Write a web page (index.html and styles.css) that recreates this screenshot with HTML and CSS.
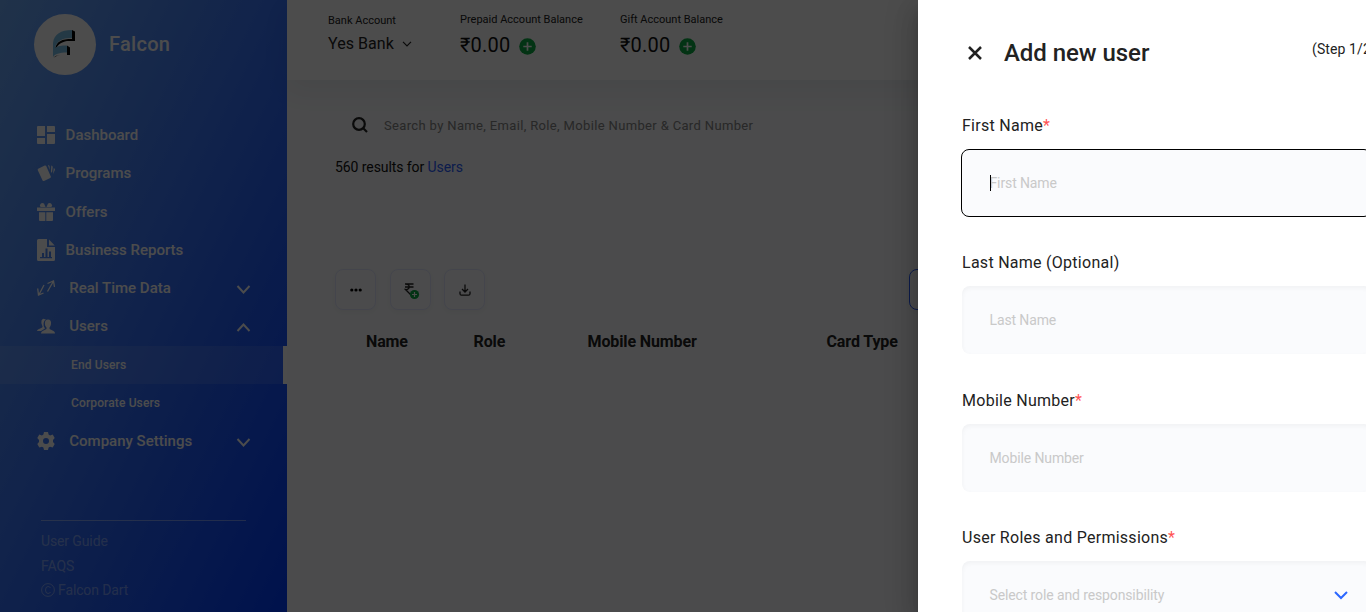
FILE: index.html
```html
<!DOCTYPE html>
<html lang="en">
<head>
<meta charset="utf-8">
<title>Falcon</title>
<link rel="stylesheet" href="styles.css">
</head>
<body>
<div class="app">
  <aside class="sidebar">
    <div class="brand">
      <div class="brand-logo">
        <svg width="24" height="30" viewBox="0 0 24 30"><path fill="#000" d="M3 21C4 12 10 10 20 10V1l3 1.500V12H15C9 13 5 16 3.500 21zM1.500 29C4 26 6 26 15 26V16.500l3 2V26H11C6 26 4 27 1.500 29z"/><path fill="#7bc0e6" d="M1 28V14C2 5 9 1 20 1V9C9.500 9 5 12 3 19C6 17 9 16.500 15 16.500V23.500C7 23.500 3 25 1 28z"/></svg>
      </div>
      <span class="brand-name">Falcon</span>
    </div>
    <nav class="menu">
      <a class="item"><svg class="ico" viewBox="0 0 18 18"><path d="M0 1q0-1 1-1h7v10H0zM10 0h7q1 0 1 1v5h-8zM0 12h8v6H1q-1 0-1-1zM10 8h8v9q0 1-1 1h-7z"/></svg><span>Dashboard</span></a>
      <a class="item"><svg class="ico" viewBox="0 0 18 18"><path d="M1.200 4.800 7.800 1.600q1-.4 1.400.5l4.600 10.500q.3 1-.6 1.400L7 17q-1 .4-1.400-.6L.8 6.200q-.3-1 .4-1.400zM11 1q1.600 0 1.600 1.500V6zM14.300 1.600q1.600.4 1.400 2l-.8 5.400-1-1.500zM16.800 4q1.600.8 1 2.200L16 10z"/></svg><span>Programs</span></a>
      <a class="item"><svg class="ico" viewBox="0 0 18 18"><path d="M0 4.500h18V8H0zM2 9.200h6.300V18H3q-1 0-1-1zM9.300 9.200H16V17q0 1-1 1H9.300zM3 2q1-3 4-1.500L8.500 4H4Q2.500 3.500 3 2zM15 2q-1-3-4-1.500L9.500 4H14q1.500-.5 1-2z"/></svg><span>Offers</span></a>
      <a class="item"><svg class="ico tall" viewBox="0 0 18 22"><path fill-rule="evenodd" d="M1.500 0H10v8h8v12.500q0 1.500-1.500 1.500h-15Q0 22 0 20.500v-19Q0 0 1.500 0zM3 18v1.300h12V18h-1v-5.500h-2V18h-1.500V9.500h-2V18H7v-4H5v4zM12 .5l5.700 6H12z"/></svg><span>Business Reports</span></a>
      <a class="item wide"><svg class="ico line" viewBox="0 0 18 18"><path d="M7 6 2 15.500M.7 9.500 1.500 16l5-2M10.500 12.500 16 3M10.500 4.500 16.500 2l1 6"/></svg><span>Real Time Data</span><svg class="chev" viewBox="0 0 14 9"><path d="M1 1l6 6.500L13 1"/></svg></a>
      <a class="item wide"><svg class="ico" viewBox="0 0 18 18"><path d="M8 2.300Q6 .5 4.500 3.500 4 6 5 8q1 1.500.2 2.500L1 12.500Q0 13 0 14h4l4-2.500Q6 9 6.600 6 7 3 9 2.400zM11 2.500q3.500.2 3 4.500-.3 2-1.500 3.500v1.500l4 2q1.500.6 1.500 2.500H4q0-2 1.600-2.600L9.500 12v-1.500Q8 9 7.900 7 7.600 2.700 11 2.500z"/></svg><span>Users</span><svg class="chev" viewBox="0 0 14 9"><path d="M1 8l6-6.500L13 8"/></svg></a>
      <a class="sub active"><span>End Users</span></a>
      <a class="sub"><span>Corporate Users</span></a>
      <a class="item wide"><svg class="ico" viewBox="0 0 18 18"><path fill-rule="evenodd" d="M7 0h4l.6 2.500 1.500.9L15.700 2.500l2 3.500L16 8v2l1.700 2-2 3.500-2.600-.8-1.500.9L11 18H7l-.6-2.400-1.500-.9-2.600.8-2-3.500L2 10V8L.3 6l2-3.500 2.600.9 1.500-.9zM9 6a3 3 0 1 0 0 6 3 3 0 0 0 0-6z"/></svg><span>Company Settings</span><svg class="chev" viewBox="0 0 14 9"><path d="M1 1l6 6.500L13 1"/></svg></a>
    </nav>
    <footer class="side-footer"><span>User Guide</span><span>FAQS</span><span class="copyright"><svg width="14" height="14" viewBox="0 0 14 14"><circle cx="7" cy="7" r="6.400"/><path d="M9.500 5Q8.800 3.500 7 3.500 4.500 3.600 4.500 7T7 10.500Q8.800 10.500 9.500 9"/></svg>Falcon Dart</span></footer>
  </aside>
  <main class="main">
    <header class="topbar">
      <div class="account bank"><span class="caption">Bank Account</span><div class="value">Yes Bank<svg width="10" height="6" viewBox="0 0 10 6"><path d="M1 .8l4 4 4-4"/></svg></div></div>
      <div class="account prepaid"><span class="caption">Prepaid Account Balance</span><div class="amount">₹0.00<svg width="17" height="17" viewBox="0 0 17 17"><circle cx="8.500" cy="8.500" r="8.300"/><path d="M8.500 4.300v8.400M4.300 8.500h8.400"/></svg></div></div>
      <div class="account gift"><span class="caption">Gift Account Balance</span><div class="amount">₹0.00<svg width="17" height="17" viewBox="0 0 17 17"><circle cx="8.500" cy="8.500" r="8.300"/><path d="M8.500 4.300v8.400M4.300 8.500h8.400"/></svg></div></div>
    </header>
    <section class="content">
      <div class="search"><svg width="16" height="16" viewBox="0 0 16 16"><circle cx="7" cy="7" r="5.800"/><path d="M11 11l4 4"/></svg><span>Search by Name, Email, Role, Mobile Number &amp; Card Number</span></div>
      <p class="results">560 results for <span>Users</span></p>
      <div class="tools">
        <button class="tool"><svg width="12" height="4" viewBox="0 0 12 4"><circle cx="1.800" cy="2" r="1.600"/><circle cx="6" cy="2" r="1.600"/><circle cx="10.200" cy="2" r="1.600"/></svg></button>
        <button class="tool"><svg class="load" width="16" height="18" viewBox="0 0 16 18"><path class="stroke" d="M1 2h8.500M1 5h8.500M1.500 2c5-.3 5 6 0 5.500L7 13"/><circle cx="10.500" cy="12.500" r="4.600" fill="#0dab43"/><path d="M10.500 10v5M8 12.500h5" stroke="#fff" stroke-width="1.200"/></svg></button>
        <button class="tool"><svg width="12" height="12" viewBox="0 0 12 12"><path class="stroke" d="M6 .5v7M3 5l3 3 3-3M1 7.500v2.200q0 1.500 1.500 1.500h7q1.500 0 1.500-1.500V7.500"/></svg></button>
        <button class="tool filter"></button>
      </div>
      <div class="table-head"><span>Name</span><span>Role</span><span>Mobile Number</span><span>Card Type</span></div>
    </section>
  </main>
</div>
<div class="overlay"></div>
<section class="drawer">
  <header class="drawer-head"><svg width="14" height="14" viewBox="0 0 14 14"><path d="M1 1l12 12M13 1L1 13"/></svg><h1>Add new user</h1><span>(Step 1/2)</span></header>
  <form class="form">
    <div class="field"><label>First Name<i>*</i></label><div class="input focused"><b class="caret"></b><span>First Name</span></div></div>
    <div class="field"><label>Last Name (Optional)</label><div class="input"><span>Last Name</span></div></div>
    <div class="field"><label>Mobile Number<i>*</i></label><div class="input"><span>Mobile Number</span></div></div>
    <div class="field"><label>User Roles and Permissions<i>*</i></label><div class="input"><span>Select role and responsibility</span><svg width="14" height="9" viewBox="0 0 14 9"><path d="M1 1l6 6 6-6"/></svg></div></div>
  </form>
</section>
</body>
</html>
```
FILE: styles.css
```css
* { box-sizing: border-box; }
html, body { height: 100%; margin: 0; overflow: hidden; }
body { font-family: Roboto, "Liberation Sans", sans-serif; color: #222; }
svg { flex: none; display: block; }
.app { display: flex; height: 612px; }

.sidebar { width: 287px; flex: none; color: #fff; display: flex; flex-direction: column; background: linear-gradient(116deg, rgb(108,168,246), rgb(0,60,255)); }
.brand { display: flex; align-items: center; gap: 13px; height: 61px; margin: 14px 0 0 34px; }
.brand-logo { width: 62px; height: 61px; border-radius: 50%; background: #fff; display: flex; align-items: center; justify-content: center; }
.brand-logo svg { margin: 0 2px 2px 0; }
.brand-name { font-size: 20px; font-weight: 500; letter-spacing: .3px; margin-bottom: 2px; }
.menu { margin-top: 41px; display: flex; flex-direction: column; }
.item { height: 38.250px; display: flex; align-items: center; padding: 0 36.500px 0 37px; gap: 10.600px; font-size: 15px; font-weight: 500; }
.item.wide { gap: 14.300px; }
.item span { flex: 1; white-space: nowrap; }
.ico { width: 18px; height: 18px; fill: #fff; }
.ico.tall { height: 22px; }
.ico.line { fill: none; stroke: #fff; stroke-width: 1.300; }
.chev { width: 15px; height: 9px; margin-top: 3px; fill: none; stroke: #fff; stroke-width: 1.900; }
.sub { height: 38.250px; display: flex; align-items: center; padding-left: 71px; font-size: 12px; font-weight: 500; letter-spacing: .13px; }
.sub.active { background: rgba(255,255,255,.1); border-right: 4px solid #fff; }
.side-footer { width: 205px; margin: 60px 0 0 41px; padding-top: 8px; border-top: 1px solid rgba(255,255,255,.4); font-size: 14px; line-height: 24.400px; letter-spacing: -.12px; color: rgba(255,255,255,.4); display: flex; flex-direction: column; }
.copyright { display: flex; align-items: center; gap: 3px; }
.copyright svg { fill: none; stroke: currentColor; }

.main { flex: 1; min-width: 0; display: flex; flex-direction: column; background: #fafbfd; }
.topbar { height: 80px; flex: none; background: #fff; box-shadow: 0 10px 25px rgba(30,40,80,.07); display: flex; padding-left: 41px; }
.account { height: 60px; white-space: nowrap; }
.bank { width: 132px; padding-top: 14px; }
.prepaid { width: 160px; padding-top: 13px; }
.gift { padding-top: 13px; }
.caption { display: block; font-size: 11px; line-height: 14px; }
.value { display: flex; align-items: center; gap: 8px; font-size: 16px; line-height: 24px; margin-top: 4px; letter-spacing: .05px; }
.value svg { fill: none; stroke: #222; stroke-width: 1.200; }
.amount { display: flex; align-items: center; gap: 9px; font-size: 20px; line-height: 26px; margin-top: 5px; color: #111; letter-spacing: .2px; }
.amount svg { margin-top: 2px; fill: #0dab43; stroke: none; }
.amount path { stroke: #fff; stroke-width: 1.700; }
.content { padding: 26px 0 0 48px; }
.search { height: 38px; display: flex; align-items: center; gap: 16px; padding-left: 17px; font-size: 13px; letter-spacing: .35px; color: #858585; }
.search svg { fill: none; stroke: #222; stroke-width: 2.200; }
.results { margin: 13px 0 0; font-size: 14px; line-height: 20px; letter-spacing: -.08px; color: #111; }
.results span { color: #2b60ff; }
.tools { display: flex; gap: 13.500px; margin-top: 92px; }
.tool { width: 41px; height: 41px; padding: 0; border: 1px solid #e4e8ff; border-radius: 8px; background: #fcfcff; display: flex; align-items: center; justify-content: center; box-shadow: 0 2px 5px rgba(0,0,0,.03); }
.tool .stroke { fill: none; stroke: #222; stroke-width: 1.300; }
.load { margin: 2px 0 0 3px; }
.tool.filter { width: 120px; margin-left: 410.500px; border-color: #2b60ff; }
.table-head { display: grid; grid-template-columns: 107.500px 114px 239px 120px; padding-left: 31px; margin-top: 22px; font-size: 16px; letter-spacing: -.12px; font-weight: 700; line-height: 20px; white-space: nowrap; }

.overlay { position: absolute; inset: 0; background: rgba(0,0,0,.7); }
.drawer { position: absolute; inset: 0 -30px 0 918px; background: #fff; overflow: visible; box-shadow: 0 8px 10px -5px rgba(0,0,0,.2), 0 16px 24px 2px rgba(0,0,0,.14), 0 6px 30px 5px rgba(0,0,0,.12); padding: 36px 0 0 44px; }
.drawer-head { display: flex; align-items: center; height: 34px; padding-left: 5.500px; }
.drawer-head svg { fill: none; stroke: #222; stroke-width: 2.500; }
h1 { margin: 0; padding-left: 22.500px; width: 330.500px; font-size: 24px; font-weight: 500; line-height: 34px; letter-spacing: -.05px; color: #222; white-space: nowrap; }
.drawer-head span { font-size: 14px; letter-spacing: .1px; margin-top: -9px; white-space: nowrap; }
.form { padding-top: 46px; display: flex; flex-direction: column; gap: 36.400px; }
.field { height: 101px; display: flex; flex-direction: column; gap: 13px; }
label { font-size: 16px; line-height: 20px; letter-spacing: .27px; }
label i { color: #ff5454; font-style: normal; }
.input { position: relative; width: 410px; height: 68px; flex: none; border-radius: 8px; background: #fafbfd; box-shadow: inset 0 2px 5px rgba(0,0,0,.045); display: flex; align-items: center; padding: 0 24px 0 27.500px; font-size: 14px; letter-spacing: -.12px; color: #c9c9c9; }
.focused { width: 411px; margin-left: -1px; border: 1px solid #000; box-shadow: none; }
.input span { flex: 1; }
.caret { position: absolute; left: 28px; top: 25px; width: 1px; height: 16px; background: #000; }
.input svg { fill: none; stroke: #2b67ff; stroke-width: 2; }
```
